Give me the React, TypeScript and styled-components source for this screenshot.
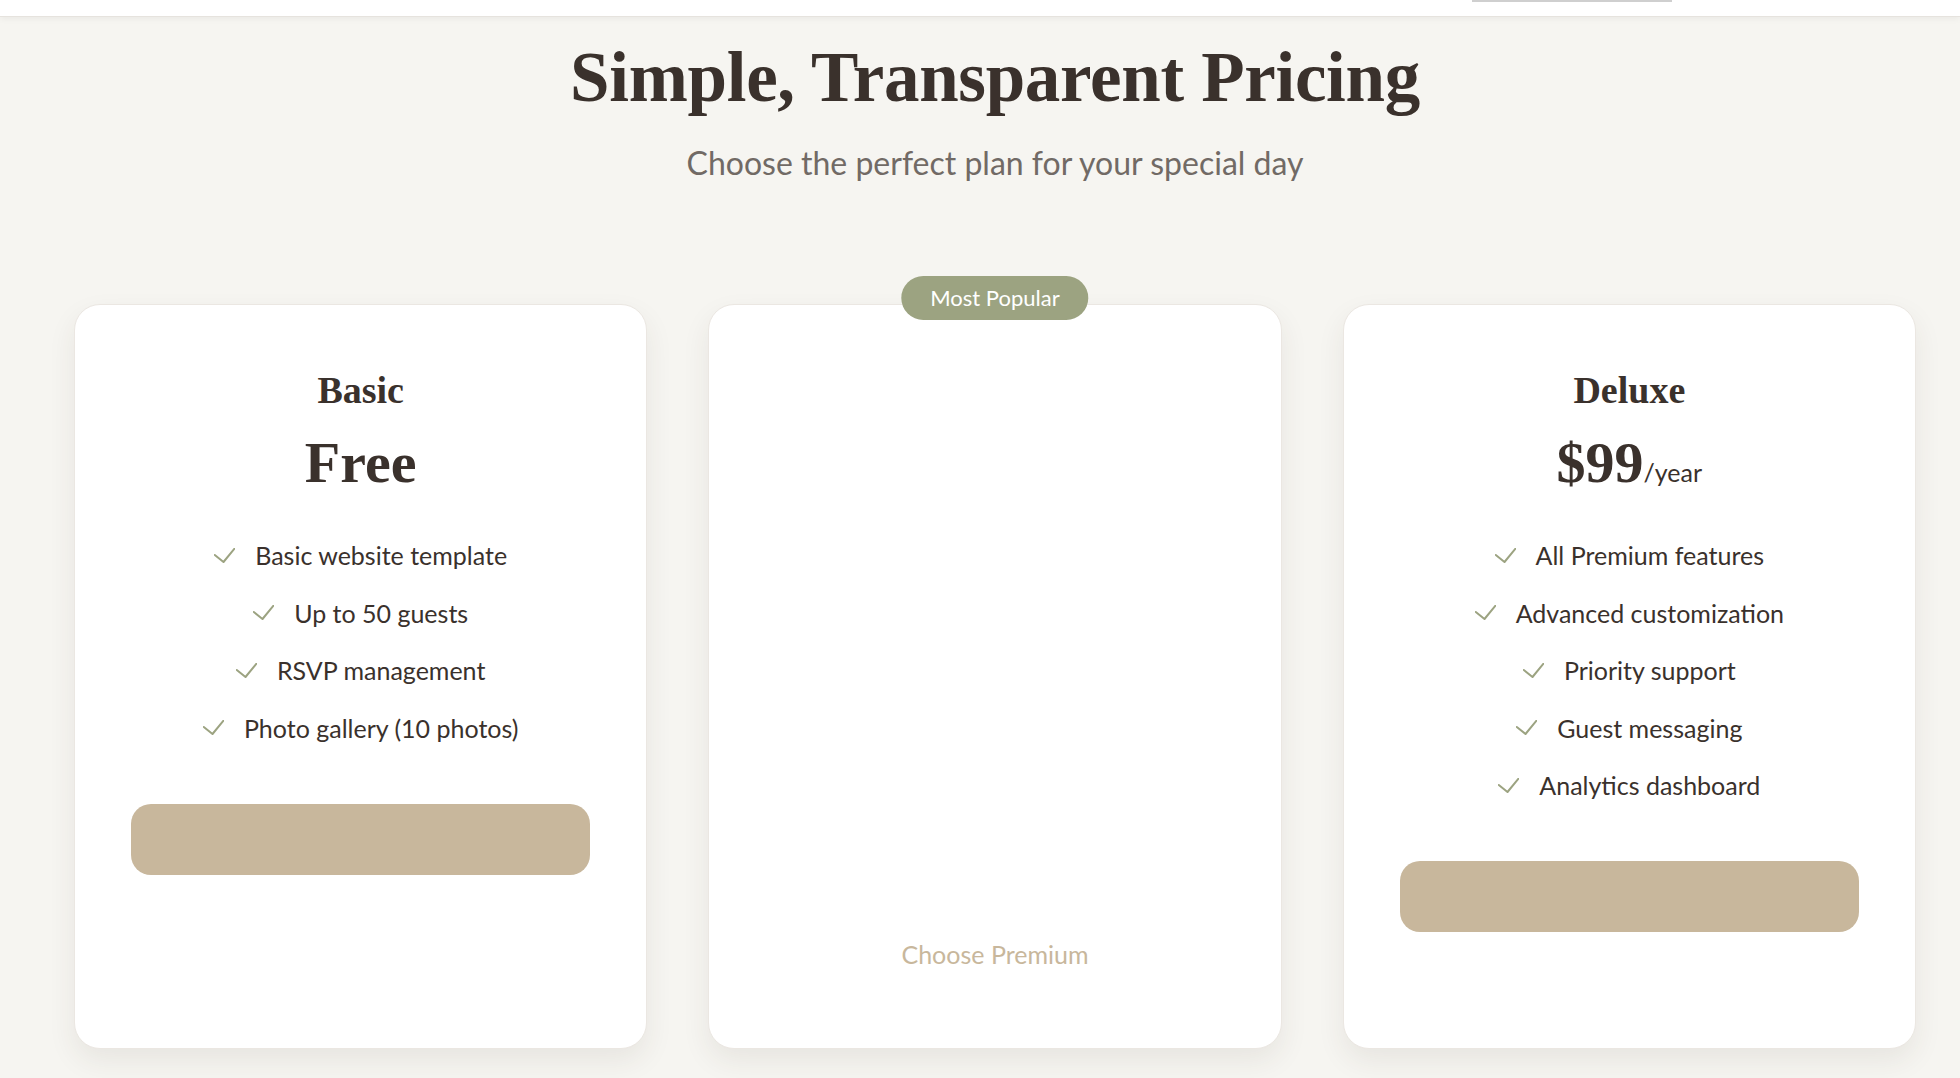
import React from 'react'
import styled, { createGlobalStyle } from 'styled-components'

const GlobalStyle = createGlobalStyle`
    html, body {
        margin: 0;
        padding: 0;
        background: #f6f5f1;
    }
    body {
        font-family: Lato, "Noto Sans", sans-serif;
        color: #3a312c;
    }
`

const TopBar = styled.div`
    display: flex;
    justify-content: flex-end;
    height: 17px;
    padding-right: 288px;
    background: #ffffff;
    border-bottom: 1px solid #e6e3de;
    box-shadow: 0 2px 6px rgba(0, 0, 0, 0.05);
    box-sizing: border-box;
`

const NavMark = styled.div`
    width: 200px;
    height: 2px;
    background: #cfcfcf;
`

const Section = styled.section`
    display: flex;
    flex-direction: column;
    align-items: center;
    padding: 18px 44px 30px 74px;
`

const Title = styled.h1`
    margin: 0;
    font-family: "Liberation Serif", "DejaVu Serif", serif;
    font-weight: 700;
    font-size: 71px;
    line-height: 84px;
    letter-spacing: -0.3px;
    color: #3a312c;
`

const Subtitle = styled.p`
    margin: 23px 0 0;
    font-size: 32px;
    line-height: 42px;
    color: #716a65;
`

const CardGrid = styled.div`
    display: grid;
    grid-template-columns: repeat(3, 1fr);
    gap: 61px;
    width: 100%;
    margin-top: 120px;
`

const Card = styled.div<{ $featured?: boolean }>`
    position: relative;
    display: flex;
    flex-direction: column;
    align-items: center;
    padding: 62px 56px 58px;
    background: #ffffff;
    border: 1px solid #ebe7e2;
    border-radius: 26px;
    box-shadow: 0 12px 28px rgba(70, 55, 40, 0.08);
    color: ${p => (p.$featured ? '#ffffff' : '#3a312c')};
`

const Badge = styled.div`
    position: absolute;
    top: -29px;
    left: 50%;
    transform: translateX(-50%);
    padding: 0 29px;
    height: 44px;
    line-height: 44px;
    border-radius: 22px;
    background: #9ca381;
    color: #ffffff;
    font-size: 22px;
    white-space: nowrap;
`

const PlanName = styled.h3`
    margin: 0;
    font-family: "Liberation Serif", "DejaVu Serif", serif;
    font-weight: 700;
    font-size: 38px;
    line-height: 46px;
`

const Price = styled.div`
    margin-top: 16px;
    height: 67px;
    font-family: "Liberation Serif", "DejaVu Serif", serif;
    font-weight: 700;
    font-size: 58px;
    line-height: 67px;

    span {
        font-family: Lato, sans-serif;
        font-weight: 400;
        font-size: 25px;
        line-height: 1;
    }
`

const FeatureList = styled.ul`
    display: flex;
    flex-direction: column;
    align-items: center;
    gap: 23.5px;
    margin: 42px 0 0;
    padding: 0;
    list-style: none;
`

const Feature = styled.li`
    display: flex;
    align-items: center;
    gap: 20px;
    font-size: 25px;
    line-height: 34px;
`

const PlanButton = styled.button<{ $featured?: boolean }>`
    width: 100%;
    margin-top: 59px;
    padding: 22px 0;
    border: none;
    border-radius: 20px;
    font-family: Lato, sans-serif;
    font-size: 25px;
    line-height: 27px;
    background: ${p => (p.$featured ? '#ffffff' : '#c8b79c')};
    color: #c8b79c;
`

function CheckIcon({ color }: { color: string }) {
    return (
        <svg width="21" height="15" viewBox="0 0 21 15" fill="none">
            <polyline points="0.8,7 9.5,14 20.3,0.8" stroke={color} strokeWidth="2" strokeLinecap="round" strokeLinejoin="round" />
        </svg>
    )
}

type Plan = {
    name: string
    price: string
    per?: string
    features: string[]
    cta: string
    featured?: boolean
}

const plans: Plan[] = [
    {
        name: 'Basic',
        price: 'Free',
        features: ['Basic website template', 'Up to 50 guests', 'RSVP management', 'Photo gallery (10 photos)'],
        cta: 'Get Started',
    },
    {
        name: 'Premium',
        price: '$49',
        per: '/year',
        features: [
            'Premium templates',
            'Unlimited guests',
            'Custom domain',
            'Unlimited photos',
            'Registry integration',
            'Music playlist',
        ],
        cta: 'Choose Premium',
        featured: true,
    },
    {
        name: 'Deluxe',
        price: '$99',
        per: '/year',
        features: ['All Premium features', 'Advanced customization', 'Priority support', 'Guest messaging', 'Analytics dashboard'],
        cta: 'Choose Deluxe',
    },
]

export default function App() {
    return (
        <>
            <GlobalStyle />
            <TopBar>
                <NavMark />
            </TopBar>
            <Section>
                <Title>Simple, Transparent Pricing</Title>
                <Subtitle>Choose the perfect plan for your special day</Subtitle>

                <CardGrid>
                    {plans.map(plan => (
                        <Card key={plan.name} $featured={plan.featured}>
                            {plan.featured && <Badge>Most Popular</Badge>}
                            <PlanName>{plan.name}</PlanName>
                            <Price>
                                {plan.price}
                                {plan.per && <span>{plan.per}</span>}
                            </Price>
                            <FeatureList>
                                {plan.features.map(f => (
                                    <Feature key={f}>
                                        <CheckIcon color={plan.featured ? '#ffffff' : '#9ca381'} />
                                        {f}
                                    </Feature>
                                ))}
                            </FeatureList>
                            <PlanButton $featured={plan.featured}>{plan.cta}</PlanButton>
                        </Card>
                    ))}
                </CardGrid>
            </Section>
        </>
    )
}
